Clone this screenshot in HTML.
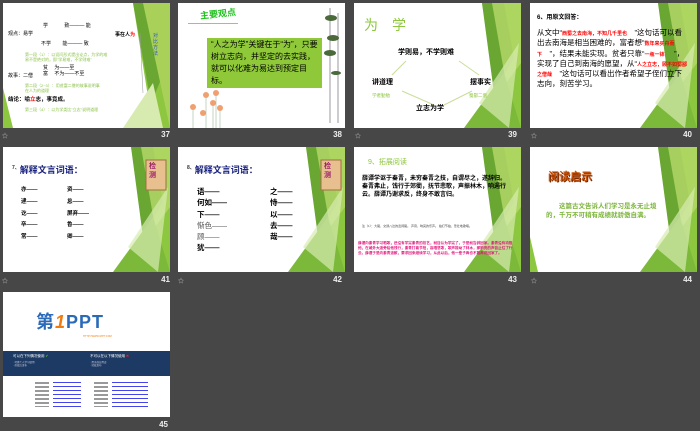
<!DOCTYPE html><html><head><meta charset="utf-8"><style>
body{margin:0;width:700px;height:431px;background:#474747;position:relative;overflow:hidden;font-family:"Liberation Sans","Noto Sans CJK SC",sans-serif}
.s{position:absolute;width:167px;height:125px;background:#fff;overflow:hidden}
.s svg.bg{position:absolute;left:0;top:0}
.n{position:absolute;color:#eee;font-size:8px;font-weight:bold;width:30px;text-align:right}
.t{position:absolute;white-space:nowrap;line-height:1.2}
.ic{position:absolute;color:#ccc;font-size:6px}
</style></head><body>
<svg width="0" height="0" style="position:absolute"><defs>
<g id="g">
<polygon points="128,0 167,0 167,125 150,125" fill="#8dc63f"/>
<polygon points="128,0 150,0 160,55 140,90" fill="#6aa732"/>
<polygon points="138,0 167,0 167,60 152,80" fill="#b5d96a" opacity=".8"/>
<polygon points="110,125 150,70 167,125" fill="#7cb93a"/>
<polygon points="125,100 165,40 155,125" fill="#d7ebb0" opacity=".7"/>
</g></defs></svg>

<!-- 37 -->
<div class="s" style="left:3px;top:3px">
<svg class="bg" width="167" height="125"><polygon points="130,0 167,0 167,125 150,125" fill="#8dc63f"/><polygon points="130,0 160,0 165,60 148,100" fill="#6aa732"/><polygon points="140,0 167,0 167,125" fill="#a9d15a"/><polygon points="0,85 10,125 0,125" fill="#8dc63f"/><polygon points="120,125 150,80 160,125" fill="#d7ebb0"/>
<path d="M137 30 L140 90" stroke="#999" stroke-width=".5" fill="none"/></svg>
<div class="t" style="left:40px;top:20px;font-size:5px">学　　　 致——— 能</div>
<div class="t" style="left:5px;top:28px;font-size:5px">观点：易学</div>
<div class="t" style="left:38px;top:38px;font-size:5px">不学　　 能——— 致</div>
<div class="t" style="left:112px;top:29px;font-size:5px;font-weight:bold">事在人<span style="color:red">为</span></div>
<div class="t" style="left:22px;top:50px;font-size:4px;color:#8bc34a">第一段（1）：以设问形式提出论点，为学的难<br>易不是绝对的，即"学易难，不学则难"</div>
<div class="t" style="left:40px;top:62px;font-size:5px">贫　 为——至<br>富　 不为——不至</div>
<div class="t" style="left:5px;top:70px;font-size:5px">故事：二僧</div>
<div class="t" style="left:22px;top:81px;font-size:4px;color:#8bc34a">第二段（2~3）：用贫富二僧的故事说明事<br>在人为的道理</div>
<div class="t" style="left:5px;top:94px;font-size:5.5px;font-weight:bold">结论：喻<span style="color:red">立</span>志，事竟成。</div>
<div class="t" style="left:22px;top:105px;font-size:4px;color:#8bc34a">第三段（4）：以为学类比"立志"说明道理</div>
<div class="t" style="left:150px;top:30px;font-size:5px;color:#2e54c0;width:6px;white-space:normal">对比方法</div>
</div>
<div class="n" style="left:140px;top:130px">37</div><div class="ic" style="left:2px;top:131px">☆</div>

<!-- 38 -->
<div class="s" style="left:178px;top:3px">
<div class="t" style="left:22px;top:6px;font-size:9px;color:#22c020;font-weight:bold;transform:rotate(-6deg)">主要观点</div>
<div style="position:absolute;left:10px;top:20px;width:50px;height:1px;background:#8c8"></div>
<div class="t" style="left:29px;top:35px;width:107px;height:48px;background:#8fc93a;font-size:8px;padding:1px 4px;white-space:normal;line-height:1.5">“人之为学”关键在于“为”，只要树立志向，并坚定的去实践，就可以化难为易达到预定目标。</div>
<svg class="bg" width="167" height="125"><g stroke="#556" stroke-width=".6"><path d="M152 5V120M160 10V120"/></g><g fill="#4a6a3a"><ellipse cx="153" cy="15" rx="6" ry="3"/><ellipse cx="155" cy="35" rx="6" ry="3"/><ellipse cx="152" cy="50" rx="6" ry="3"/><ellipse cx="158" cy="70" rx="5" ry="2"/></g>
<g fill="#f0a070"><circle cx="15" cy="104" r="3"/><circle cx="28" cy="92" r="3"/><circle cx="38" cy="90" r="3"/><circle cx="35" cy="100" r="3"/><circle cx="42" cy="105" r="3"/><circle cx="25" cy="110" r="3"/></g>
<g stroke="#8a8" stroke-width=".5"><path d="M15 107V125M28 95V125M38 93V125M35 103V125M42 108V125"/></g></svg>
</div>
<div class="n" style="left:312px;top:130px">38</div>

<!-- 39 -->
<div class="s" style="left:354px;top:3px">
<svg class="bg" width="167" height="125"><use href="#g"/><g stroke="#c9dd9a" stroke-width="1"><path d="M52 58L38 72M105 58L125 72M48 88L80 102M118 88L90 102"/></g></svg>
<div class="t" style="left:10px;top:14px;font-size:14px;color:#8dc63f">为　学</div>
<div class="t" style="left:44px;top:46px;font-size:7px;font-weight:bold">学则易，不学则难</div>
<div class="t" style="left:18px;top:76px;font-size:7px;font-weight:bold">讲道理</div>
<div class="t" style="left:116px;top:76px;font-size:7px;font-weight:bold">摆事实</div>
<div class="t" style="left:18px;top:90px;font-size:4.5px;color:#8dc63f">学者勤勉</div>
<div class="t" style="left:115px;top:90px;font-size:4.5px;color:#8dc63f">蜀鄙二僧</div>
<div class="t" style="left:62px;top:102px;font-size:7px;font-weight:bold">立志为学</div>
</div>
<div class="n" style="left:487px;top:130px">39</div><div class="ic" style="left:355px;top:131px">☆</div>

<!-- 40 -->
<div class="s" style="left:530px;top:3px">
<svg class="bg" width="167" height="125"><use href="#g"/></svg>
<div class="t" style="left:7px;top:12px;font-size:6px;font-weight:bold">6、用原文回答：</div>
<div class="t" style="left:7px;top:25px;font-size:7.5px;line-height:1.37;white-space:normal;width:152px">从文中“<span style="color:red;font-size:5px;font-weight:bold">西蜀之去南海，不知几千里也</span>　”这句话可以看出去南海是相当困难的，富者想“<span style="color:red;font-size:5px;font-weight:bold">数年来买舟而下</span>　”，结果未能实现。贫者只靠“<span style="color:red;font-size:5px;font-weight:bold">一瓶一钵</span>　 ”，实现了自己到南海的愿望，从“<span style="color:red;font-size:5px;font-weight:bold">人之立志，顾不如蜀鄙之僧哉</span>　”这句话可以看出作者希望子侄们立下志向，刻苦学习。</div>
</div>
<div class="n" style="left:662px;top:130px">40</div><div class="ic" style="left:531px;top:131px">☆</div>

<!-- 41 -->
<div class="s" style="left:3px;top:147px">
<svg class="bg" width="167" height="125"><use href="#g"/><rect x="143" y="13" width="20" height="30" fill="#e8c090" stroke="#a07040"/></svg>
<div class="t" style="left:146px;top:15px;font-size:7px;color:#9b1c6a;font-weight:bold;line-height:1.3">检<br>测</div>
<div class="t" style="left:9px;top:18px;font-size:9px;color:#1a237e;font-weight:bold"><sup style="font-size:5px;color:#333">7、</sup>解释文言词语：</div>
<div class="t" style="left:18px;top:38px;font-size:5.5px;line-height:2.15;font-weight:bold">亦——<br>逮——<br>讫——<br>卒——<br>常——</div>
<div class="t" style="left:64px;top:38px;font-size:5.5px;line-height:2.15;font-weight:bold">资——<br>怠——<br>屏弃——<br>鲁——<br>卿——</div>
</div>
<div class="n" style="left:140px;top:275px">41</div><div class="ic" style="left:2px;top:276px">☆</div>

<!-- 42 -->
<div class="s" style="left:178px;top:147px">
<svg class="bg" width="167" height="125"><use href="#g"/><rect x="143" y="13" width="20" height="30" fill="#e8c090" stroke="#a07040"/></svg>
<div class="t" style="left:146px;top:15px;font-size:7px;color:#9b1c6a;font-weight:bold;line-height:1.3">检<br>测</div>
<div class="t" style="left:9px;top:18px;font-size:9px;color:#1a237e;font-weight:bold"><sup style="font-size:5px;color:#333">8、</sup>解释文言词语：</div>
<div class="t" style="left:19px;top:39px;font-size:7.5px;line-height:1.5;font-weight:bold">语——<br>何如——<br>下——<br><span style="font-weight:normal;color:#555">惭色——<br>顾——</span><br>犹——</div>
<div class="t" style="left:92px;top:39px;font-size:7.5px;line-height:1.5;font-weight:bold">之——<br>恃——<br>以——<br>去——<br>哉——</div>
</div>
<div class="n" style="left:312px;top:275px">42</div><div class="ic" style="left:178px;top:276px">☆</div>

<!-- 43 -->
<div class="s" style="left:354px;top:147px">
<svg class="bg" width="167" height="125"><use href="#g"/></svg>
<div class="t" style="left:14px;top:12px;font-size:7px;color:#8dc63f">9、拓展阅读</div>
<div class="t" style="left:8px;top:28px;font-size:6px;font-weight:bold;white-space:normal;width:150px;line-height:1.35">薛谭学讴于秦青，未穷秦青之技，自谓尽之，遂辞归。<br>秦青弗止，饯行于郊衢，抚节悲歌，声振林木，响遏行云。薛谭乃谢求反，终身不敢言归。</div>
<div class="t" style="left:8px;top:78px;font-size:3px;white-space:normal;width:150px;color:#444">注（1）：大路，交通八达的宽阔路。 声音，响亮的乐声。 拍打节拍，悲壮地歌唱。</div>
<div class="t" style="left:4px;top:94px;font-size:3.6px;color:#e0107a;font-weight:bold;white-space:normal;width:155px;line-height:1.4">薛谭向秦青学习唱歌，还没有学完秦青的技艺，就自认为学完了，于是就告辞回家。秦青没有劝阻他，在城外大道旁给他饯行，秦青打着节拍，高唱悲歌，歌声振动了林木，那响亮的声音止住了行云。薛谭于是向秦青道歉，要求回来继续学习，从此以后，他一辈子再也不敢再说回家了。</div>
</div>
<div class="n" style="left:487px;top:275px">43</div>

<!-- 44 -->
<div class="s" style="left:530px;top:147px">
<svg class="bg" width="167" height="125"><use href="#g"/><polygon points="0,90 8,125 0,125" fill="#8dc63f"/></svg>
<div class="t" style="left:18px;top:24px;font-size:11px;font-weight:bold;color:#c8520a;text-shadow:1px 1px 0 #7a2a00">阅读启示</div>
<div class="t" style="left:16px;top:55px;font-size:6.5px;color:#7cb53a;font-weight:bold;white-space:normal;width:120px;line-height:1.45">　　这篇古文告诉人们学习是永无止境的，千万不可稍有成绩就骄傲自满。</div>
</div>
<div class="n" style="left:662px;top:275px">44</div><div class="ic" style="left:531px;top:276px">☆</div>

<!-- 45 -->
<div class="s" style="left:3px;top:292px">
<div class="t" style="left:33px;top:20px;font-size:18px;color:#2a6ab8;font-weight:bold;letter-spacing:1px">第<span style="color:#f07c10;font-style:italic">1</span>PPT</div>
<div class="t" style="left:80px;top:43px;font-size:2.5px;color:#f07c10">HTTP://WWW.1PPT.COM</div>
<div style="position:absolute;left:0;top:59px;width:167px;height:25px;background:#1d3a64"></div>
<div class="t" style="left:10px;top:62px;font-size:3.5px;color:#fff">可以在下列情况使用 <span style="color:#6c3">✔</span></div>
<div class="t" style="left:87px;top:62px;font-size:3.5px;color:#fff">不可以在以下情况使用 <span style="color:#e22">✖</span></div>
<div class="t" style="left:10px;top:69px;font-size:2.5px;color:#ccd">· 可供个人学习使用<br>· 修改后发布</div>
<div class="t" style="left:87px;top:69px;font-size:2.5px;color:#ccd">· 用于商业用途<br>· 转载发布</div>
<div style="position:absolute;left:32px;top:90px;width:14px;height:25px;background:repeating-linear-gradient(#999 0 2px,#fff 2px 4px)"></div>
<div style="position:absolute;left:50px;top:90px;width:28px;height:25px;background:repeating-linear-gradient(#44e 0 1px,#fff 1px 4px)"></div>
<div style="position:absolute;left:91px;top:90px;width:14px;height:25px;background:repeating-linear-gradient(#999 0 2px,#fff 2px 4px)"></div>
<div style="position:absolute;left:109px;top:90px;width:36px;height:25px;background:repeating-linear-gradient(#44e 0 1px,#fff 1px 4px)"></div>
</div>
<div class="n" style="left:138px;top:420px">45</div>
</body></html>
